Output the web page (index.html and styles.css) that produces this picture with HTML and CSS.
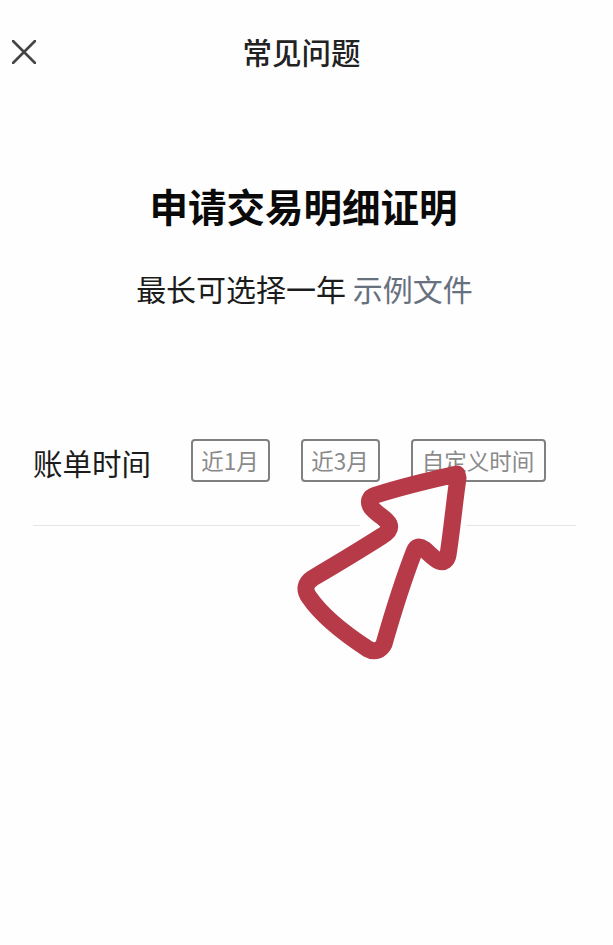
FILE: index.html
```html
<!DOCTYPE html>
<html lang="zh-CN">
<head>
<meta charset="utf-8">
<title>常见问题</title>
<link rel="stylesheet" href="styles.css">
</head>
<body>
<div class="page">
  <header class="nav">
    <svg class="close" viewBox="0 0 24 24" width="24" height="24" aria-label="关闭"><path d="M1 1L23 23M23 1L1 23"/></svg>
    <div class="nav-title">常见问题</div>
  </header>
  <main class="content">
    <h1 class="title">申请交易明细证明</h1>
    <p class="subtitle">最长可选择一年 <a class="link">示例文件</a></p>
    <div class="row">
      <span class="label">账单时间</span>
      <div class="options">
        <button class="opt opt-short">近1月</button>
        <button class="opt opt-short">近3月</button>
        <button class="opt opt-long">自定义时间</button>
      </div>
    </div>
  </main>
  <svg class="arrow" viewBox="0 0 613 945" width="613" height="945">
    <rect class="gap" x="360" y="521" width="106" height="7"/>
    <path class="arrow-shape" d="M457 474C430 480 398 488 376 495C369 497 368 502 371 507C376 514 386 518 389 524C391 529 387 533 382 536C360 550 335 565 313 578C305 583 304 590 309 597C322 616 348 636 368 649C375 653 381 650 384 644C392 616 404 578 414 552C416 546 420 546 424 549C429 553 434 559 439 561C444 563 447 560 448 555C452 530 454 505 458 478Z"/>
  </svg>
</div>
</body>
</html>
```
FILE: styles.css
```css
* { box-sizing: border-box; }
html, body { margin: 0; padding: 0; background: #fefefe; }
body { font-family: "Noto Sans CJK SC", "Liberation Sans", sans-serif; color: #1a1a1a; }
.page { position: relative; width: 613px; height: 945px; overflow: hidden; }
.nav { display: flex; align-items: center; justify-content: center; height: 104px; padding: 0 10px 3px 0; position: relative; }
.close { position: absolute; left: 12px; top: 40px; }
.close path { fill: none; stroke: #444; stroke-width: 2.6; stroke-linecap: round; }
.nav-title { font-size: 29.5px; font-weight: 500; line-height: 40px; color: #222; }
.content { padding: 0 37px 0 33px; }
.title { margin: 75px 2px 0 0; font-size: 38.5px; line-height: 52px; font-weight: 700; color: #0a0a0a; text-align: center; }
.subtitle { margin: 36px 0 0; font-size: 30px; line-height: 42px; text-align: center; color: #1c1c1c; }
.link { color: #67717e; }
.row { display: flex; align-items: flex-start; justify-content: space-between; margin-top: 130px; padding: 0 30.5px 40px 0; border-bottom: 1px solid #e6e6e6; }
.label { font-size: 29.5px; line-height: 46px; color: #1c1c1c; }
.options { display: flex; gap: 31px; }
.opt { height: 43px; padding: 0; border: 2px solid #808080; border-radius: 4px; background: #fefefe; color: #8a8a8a; font-family: inherit; font-size: 22.5px; line-height: 39px; }
.opt-short { width: 79px; }
.opt-long { width: 135px; }
.arrow { position: absolute; left: 0; top: 0; }
.gap { fill: #fefefe; }
.arrow-shape { fill: #fefefe; stroke: #b73a48; stroke-width: 17; stroke-linejoin: round; }
```
